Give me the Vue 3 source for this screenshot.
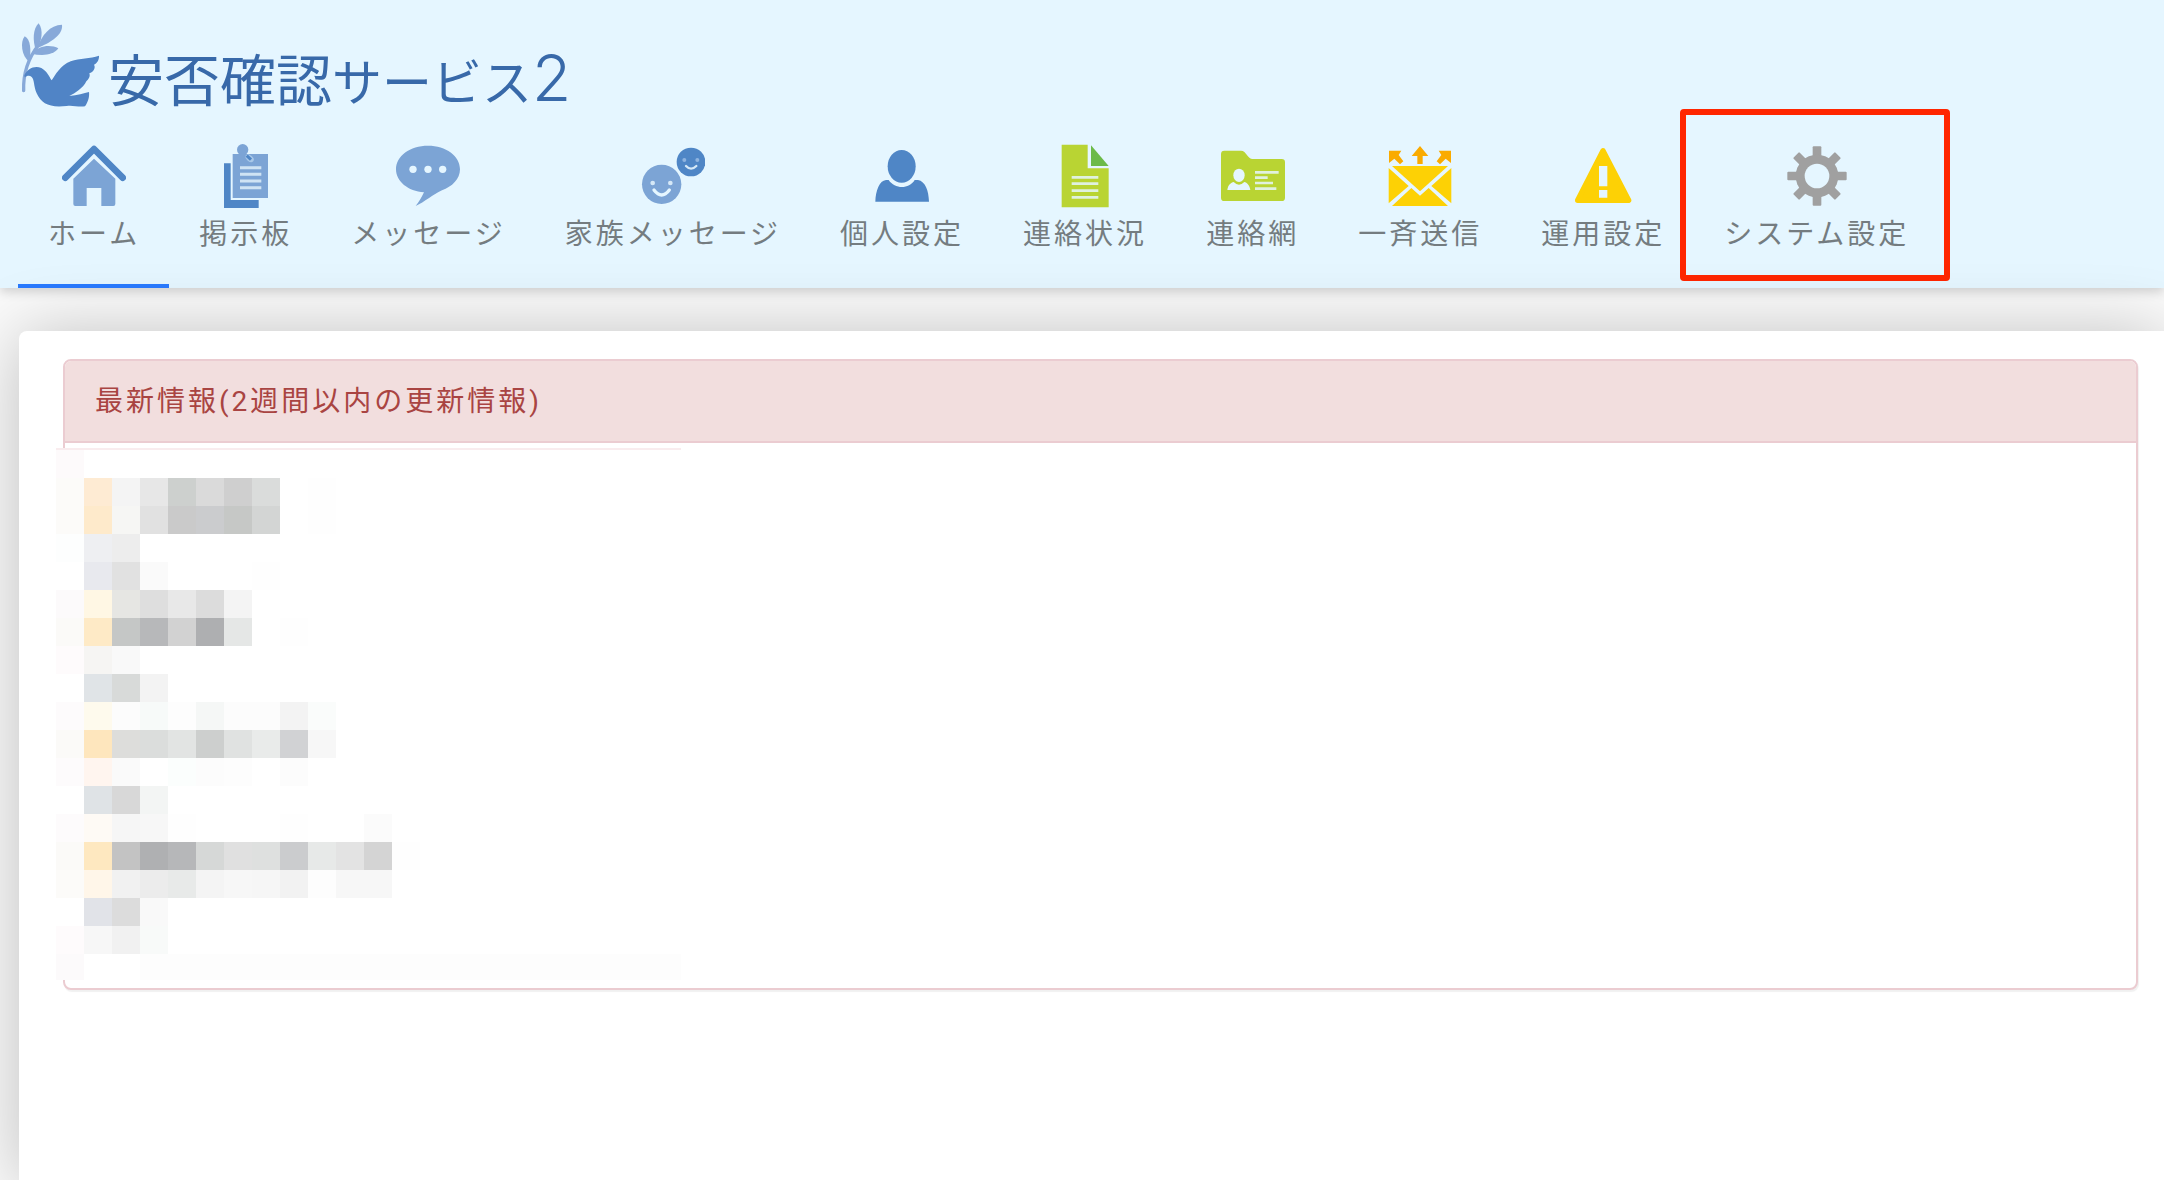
<template>
  <div class="page">
    <header class="header">
      <a class="brand" href="#">
        <svg class="dove" viewBox="60 36 240 258" aria-hidden="true">
          <path d="M71 242 C69 190 84 145 116 104" fill="none" stroke="#87a9d9" stroke-width="10" stroke-linecap="round" />
          <path d="M88 156 C64 138 60 96 74 79 C92 88 94 120 88 156 Z" fill="#87a9d9" />
          <path d="M108 122 C97 92 99 55 116 40 C131 60 126 95 108 122 Z" fill="#87a9d9" />
          <path d="M112 114 C125 75 150 45 186 44 C190 75 150 98 112 114 Z" fill="#87a9d9" />
          <path d="M94 131 C120 103 155 105 175 115 C160 137 125 138 94 131 Z" fill="#87a9d9" />
          <path
            d="M73 196 C82 176 104 165 124 174 C143 185 147 200 155 211 C166 196 180 166 212 154 C240 144 270 146 297 137 C298 150 290 160 282 164 C288 174 280 186 268 190 C272 200 265 209 259 214 C250 234 225 250 208 258 C232 257 252 249 267 246 C269 262 263 278 255 289 C235 292 218 285 200 288 C150 294 124 282 110 250 C100 226 104 210 95 201 C88 195 80 198 74 202 Z"
            fill="#5084c6"
          />
        </svg>
        <span class="brand-name">安否確認<span class="kana">サービス</span><span class="digit">2</span></span>
      </a>

      <nav class="tabs">
        <a
          v-for="tab in tabs"
          :key="tab.icon"
          href="#"
          class="tab"
          :class="{ active: tab.icon === activo, marked: tab.marked }"
          @click.prevent="activo = tab.icon"
        >
          <svg class="icon" viewBox="0 0 192 192" aria-hidden="true">
            <g v-if="tab.icon === 'home'">
              <path d="M10 101 L96 15 L182 101" fill="none" stroke="#4f86c6" stroke-width="20" stroke-linecap="round" stroke-linejoin="round" />
              <path d="M34 104 L96 44 L160 104 V180 Q160 186 154 186 H118 V132 H74 V186 H40 Q34 186 34 180 Z" fill="#7ca4d5" />
            </g>
            <g v-else-if="tab.icon === 'board'">
              <path d="M30 58 H50 V168 H134 V192 H30 Z" fill="#4f86c6" />
              <path d="M56 30 H162 V162 H56 Z" fill="#7ca4d5" />
              <circle cx="86" cy="17" r="17" fill="#7ca4d5" />
              <ellipse cx="107" cy="43" rx="14" ry="9" transform="rotate(40 107 43)" fill="#a9c8e8" />
              <path d="M98 35 L111 47" stroke="#4f86c6" stroke-width="9" />
              <path d="M78 71 H142 M78 91 H142 M78 111 H142 M78 131 H142" stroke="#cfe3f4" stroke-width="9" />
            </g>
            <g v-else-if="tab.icon === 'message'">
              <path d="M96 5 C150 5 192 36 192 76 C192 106 168 128 138 139 C110 152 86 174 59 186 C70 172 78 158 84 145 C36 142 0 112 0 76 C0 36 42 5 96 5 Z" fill="#7ca4d5" />
              <g fill="#e5f6ff">
                <circle cx="51" cy="76" r="11" />
                <circle cx="96" cy="76" r="11" />
                <circle cx="140" cy="76" r="11" />
              </g>
            </g>
            <g v-else-if="tab.icon === 'family'">
              <circle cx="62" cy="121" r="59" fill="#7ca4d5" />
              <circle cx="150" cy="54" r="43" fill="#4f86c6" />
              <g fill="#d5e8f7">
                <circle cx="35" cy="117" r="7" />
                <circle cx="88" cy="117" r="7" />
              </g>
              <g fill="#8fb4e0">
                <circle cx="130" cy="48" r="6" />
                <circle cx="169" cy="48" r="6" />
              </g>
              <path d="M39 138 Q62 168 85 138" fill="none" stroke="#e5f6ff" stroke-width="10" stroke-linecap="round" />
              <path d="M135 66 Q150 82 166 66" fill="none" stroke="#d5e8f7" stroke-width="7" stroke-linecap="round" />
            </g>
            <g v-else-if="tab.icon === 'person'" fill="#4f86c6">
              <ellipse cx="95" cy="67" rx="42" ry="49" />
              <path d="M16 173 C17 140 28 110 48 108 H56 C75 136 117 136 134 108 H144 C166 112 176 140 177 173 Z" />
            </g>
            <g v-else-if="tab.icon === 'document'">
              <path d="M26 2 H104 V73 H167 V190 H26 Z" fill="#b9d433" />
              <path d="M114 4 L167 66 H114 Z" fill="#6cba48" />
              <path d="M56 100 H136 M56 119 H136 M56 140 H136 M56 160 H136" stroke="#dff1df" stroke-width="8" />
            </g>
            <g v-else-if="tab.icon === 'folder'">
              <path d="M10 20 H60 C76 20 80 45 95 45 H182 Q192 45 192 55 V161 Q192 171 182 171 H10 Q0 171 0 161 V30 Q0 20 10 20 Z" fill="#b9d433" />
              <g fill="#e5f6ff">
                <ellipse cx="54" cy="94" rx="17" ry="20" />
                <path d="M19 138 C21 122 30 116 38 114 Q54 130 70 114 C78 116 86 124 88 138 Z" />
              </g>
              <path d="M102 85 H173 M102 101 H140 M102 117 H156 M102 134 H166" stroke="#e0f1de" stroke-width="8" />
            </g>
            <g v-else-if="tab.icon === 'mail'">
              <g fill="#faab00">
                <path d="M96 6 L121 36 H104 V60 H88 V36 H71 Z" />
                <path d="M3 20 H40 L32 33 L46 52 L36 61 L19 44 L3 57 Z" />
                <path d="M189 20 H152 L160 33 L146 52 L156 61 L173 44 L189 57 Z" />
              </g>
              <g fill="#fdd105">
                <path d="M12 66 H180 L96 142 Z" />
                <path d="M2 72 L62 126 L2 178 Z" />
                <path d="M190 72 L130 126 L190 178 Z" />
                <path d="M12 186 L70 132 L96 155 L122 132 L180 186 Z" />
              </g>
            </g>
            <g v-else-if="tab.icon === 'warning'">
              <path d="M96 20 L173 169 H20 Z" fill="#fdd105" stroke="#fdd105" stroke-width="16" stroke-linejoin="round" />
              <path d="M84 66 H109 V127 H84 Z M84 138 H109 V161 H84 Z" fill="#e5f6ff" />
            </g>
            <g v-else>
              <g fill="#a0a0a0">
                <rect v-for="angle in [0, 45, 90, 135]" :key="angle" x="83" y="7" width="26" height="178" rx="3" :transform="`rotate(${angle} 96 96)`" />
                <circle cx="96" cy="96" r="64" />
              </g>
              <circle cx="96" cy="96" r="37" fill="#e5f6ff" />
            </g>
          </svg>
          <span class="label">{{ tab.label }}</span>
        </a>
      </nav>
    </header>

    <main class="card">
      <section class="panel">
        <h2 class="panel-title">最新情報(2週間以内の更新情報)</h2>
        <div class="mosaic" aria-hidden="true">
          <div v-for="(row, i) in mosaic" :key="i" class="row">
            <span v-for="(color, j) in row" :key="j" class="cell" :style="{ background: color }"></span>
          </div>
        </div>
      </section>
    </main>
  </div>
</template>

<script setup>
import { ref } from 'vue'

const activo = ref('home')

const tabs = [
  { icon: 'home', label: 'ホーム' },
  { icon: 'board', label: '掲示板' },
  { icon: 'message', label: 'メッセージ' },
  { icon: 'family', label: '家族メッセージ' },
  { icon: 'person', label: '個人設定' },
  { icon: 'document', label: '連絡状況' },
  { icon: 'folder', label: '連絡網' },
  { icon: 'mail', label: '一斉送信' },
  { icon: 'warning', label: '運用設定' },
  { icon: 'gear', label: 'システム設定', marked: true }
]

// Colors of the pixelated block, one list per row
const mosaic = [
  '#fdfafb',
  '#fcfbf9 #feebd3 #f4f4f4 #e7e7e7 #cdd0ce #dadada #cfcfcf #dadcdb #fff #fefefe',
  '#fcfbf9 #feeacb #f6f6f4 #e1e1e1 #cacaca #cbccce #c6c8c6 #d3d5d4 #fff #fefefe',
  '#fdfefe #eeeff2 #ededed',
  '#fff #e8e9ee #e1e1e1 #fafafa #fff #fff #fff #fefefe',
  '#fcfafb #fff7e4 #e6e6e3 #dedede #e8e8e8 #dcdcdc #f4f4f4',
  '#fbfaf8 #feeac6 #c5c7c6 #b7b8ba #d2d2d2 #aeafb1 #e5e7e6 #fff #fefefe',
  '#fefbfc #f6f5f3 #f9f9f9',
  '#fff #e0e4e7 #d8dad9 #f3f3f3',
  '#fdfbfc #fefaed #fcfcfc #f7faf9 #fdfdfd #f5f7f6 #fcfcfc #fcfcfc #f3f3f3 #fafcfb',
  '#fbfaf8 #fee6bd #dddddb #dbdddc #e2e4e3 #cdcfce #e0e2e1 #e9ebea #d1d2d4 #f7f7f7',
  '#fdfbfc #fff5ef #fafafa #fff #fbfefd #fcfcfc #fdfdfd #fff #fcfcfc',
  '#fff #dfe3e6 #d8d8d8 #f3f5f4',
  '#fdfbfc #fefaf5 #f6f6f6 #f7f7f7 #fefefe #fff #fff #fff #fefefe #fff #fff #fbfbfb',
  '#fbfaf8 #fee8c0 #c3c3c3 #afb0b2 #b6b7b9 #d6d8d7 #e0e0e0 #dee0df #cbccce #e7e9e8 #e3e3e3 #d4d4d4 #fefefe',
  '#fcfbf9 #fff6e9 #f1f1f1 #ececec #e8eae9 #f4f4f4 #f7f7f7 #f6f6f6 #f2f2f2 #fdfdfd #f7f7f7 #f7f7f7',
  '#fff #e1e3e8 #dcdcdc #f9f9f9',
  '#fefbfc #f7f7f7 #f1f1f1 #f8faf9',
  '#fcfafb #fff #fff' + ' #fdfdfd'.repeat(20)
].map(row => row.split(' '))
</script>

<style>
body {
  margin: 0;
  background: #fafafa;
}
</style>

<style scoped>
.page {
  display: flex;
  flex-direction: column;
  min-height: 100vh;
  overflow: hidden;
  font-family: Roboto, "Noto Sans CJK JP", sans-serif;
  font-size: 28px;
}

.header {
  background: #e5f6ff;
  box-shadow: 0 4px 10px rgba(0, 0, 0, 0.16);
}

.brand {
  display: flex;
  align-items: flex-start;
  gap: 8px;
  height: 106px;
  padding: 22px 20px 0;
  color: #3869a9;
  text-decoration: none;
}

.dove {
  width: 80px;
  height: 86px;
}

.brand-name {
  font-family: "Noto Sans CJK JP", sans-serif;
  font-size: 56px;
  line-height: 110px;
}

.kana {
  font-size: 50px;
}

.digit {
  font-family: Inter, sans-serif;
  font-size: 64px;
  font-weight: 300;
}

.tabs {
  display: flex;
  padding-left: 18px;
}

.tab {
  position: relative;
  display: flex;
  flex-direction: column;
  align-items: center;
  padding: 16px 29px 22px 30px;
  border-bottom: 4px solid transparent;
  color: #747c80;
  text-decoration: none;
  letter-spacing: 3px;
  white-space: nowrap;
}

.tab.active {
  border-bottom-color: #297aff;
}

/* Red frame around the highlighted entry */
.tab.marked::after {
  content: "";
  position: absolute;
  inset: -19px -12px 3px -14px;
  border: 6px solid #ff2600;
  border-radius: 4px;
}

.icon {
  width: 64px;
  height: 64px;
}

.label {
  line-height: 54px;
}

.card {
  position: relative;
  flex: 1;
  margin: 43px 0 0 19px;
  padding: 28px 26px 28px 44px;
  background: #fff;
  border-radius: 8px 0 0 0;
  box-shadow: 0 4px 70px rgba(0, 0, 0, 0.24);
}

.panel {
  background: #fff;
  border: 2px solid #ebccd1;
  border-radius: 8px;
  box-shadow: 1px 2px 1px rgba(0, 0, 0, 0.06);
}

.panel-title {
  margin: 0;
  padding: 16px 30px 14px;
  background: #f2dede;
  border-bottom: 2px solid #ebccd1;
  border-radius: 6px 6px 0 0;
  color: #a94442;
  font-size: 28px;
  font-weight: 400;
  line-height: 50px;
  letter-spacing: 3px;
}

.mosaic {
  max-width: 625px;
  margin: 5px 0 8px -9px;
  overflow: hidden;
  background: #fff;
  border-top: 2px solid #f9ecee;
  box-sizing: border-box;
}

.row {
  display: flex;
}

.cell {
  flex: none;
  width: 28px;
  height: 28px;
}

.row:last-child .cell {
  height: 26px;
}
</style>
